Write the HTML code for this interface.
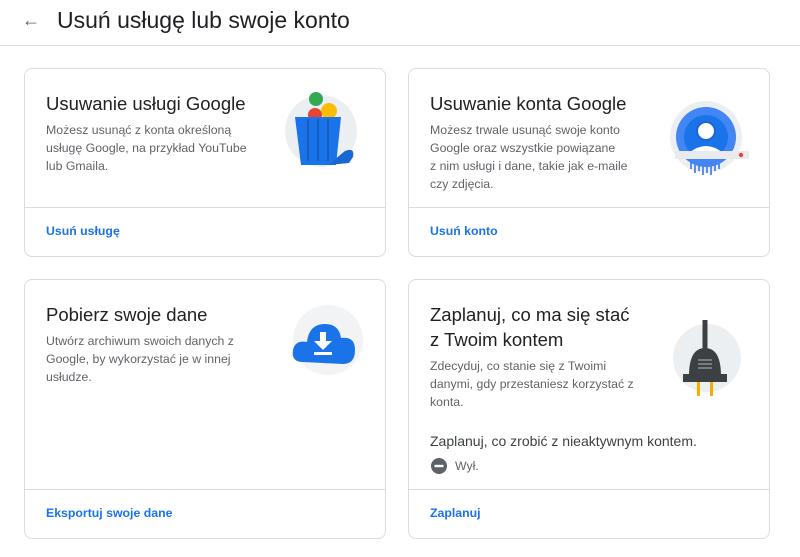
<!DOCTYPE html>
<html><head><meta charset="utf-8"><style>
*{margin:0;padding:0;box-sizing:border-box}
body{width:800px;height:557px;background:#fff;font-family:"Liberation Sans",sans-serif;position:relative;overflow:hidden;color:#202124}
.hdr{position:absolute;left:0;top:0;width:800px;height:46px;border-bottom:1px solid #dadce0}
.hdr .t{position:absolute;left:57px;top:7px;font-size:23px;color:#202124}
.hdr .a{position:absolute;left:22px;top:10px;font-size:18px;color:#5f6368}
.card{position:absolute;border:1px solid #dadce0;border-radius:8px}
.card h2{position:absolute;left:21px;font-size:18.5px;font-weight:normal;color:#202124;line-height:25px}
.card p{position:absolute;left:21px;font-size:12.3px;line-height:18px;color:#5f6368}
.card .div{position:absolute;left:0;right:0;height:1px;background:#dadce0}
.card .l{position:absolute;left:21px;font-size:12.3px;font-weight:bold;color:#1a73e8}
.card svg{position:absolute}
</style></head><body>
<div class="hdr"><span class="a">←</span><span class="t">Usuń usługę lub swoje konto</span></div>

<div class="card" style="left:24px;top:68px;width:362px;height:189px">
<h2 style="top:22px">Usuwanie usługi Google</h2>
<p style="top:52px">Możesz usunąć z konta określoną<br>usługę Google, na przykład YouTube<br>lub Gmaila.</p>
<svg style="left:258px;top:18px" width="80" height="80" viewBox="0 0 80 80">
<circle cx="38" cy="44" r="36" fill="#eceff1"/>
<circle cx="33" cy="12" r="7" fill="#34a853"/>
<circle cx="46" cy="24" r="8" fill="#fbbc04"/>
<circle cx="32" cy="28" r="7" fill="#ea4335"/>
<path d="M12 30 H58 L53 78 H18 Z" fill="#1a73e8"/>
<path d="M25 32 V74 M35 32 V74 M45 32 V74" stroke="#1557b0" stroke-width="1.5"/>
<path d="M45 78 L62 64 Q72 60 70 70 L66 76 Z" fill="#1967d2"/>
</svg>
<div class="div" style="top:138px"></div>
<div class="l" style="top:155px">Usuń usługę</div>
</div>

<div class="card" style="left:408px;top:68px;width:362px;height:189px">
<h2 style="top:22px">Usuwanie konta Google</h2>
<p style="top:52px">Możesz trwale usunąć swoje konto<br>Google oraz wszystkie powiązane<br>z nim usługi i dane, takie jak e-maile<br>czy zdjęcia.</p>
<svg style="left:258px;top:30px" width="90" height="80" viewBox="0 0 90 80">
<circle cx="39" cy="38" r="36" fill="#eceff1"/>
<circle cx="39" cy="38" r="30" fill="#4285f4"/>
<circle cx="39" cy="38" r="22" fill="#1a73e8"/>
<circle cx="39" cy="32" r="9" fill="#fff" stroke="#1967d2" stroke-width="2"/>
<path d="M22 54 Q39 40 56 54 Z" fill="#fff"/>
<rect x="8" y="52" width="74" height="8" fill="#e8eaed"/>
<circle cx="74" cy="56" r="2.2" fill="#ea4335"/>
<path d="M24 60 v10 M28 60 v14 M32 60 v12 M36 60 v16 M40 60 v14 M44 60 v16 M48 60 v12 M52 60 v10" stroke="#4285f4" stroke-width="1.8"/>
</svg>
<div class="div" style="top:138px"></div>
<div class="l" style="top:155px">Usuń konto</div>
</div>

<div class="card" style="left:24px;top:279px;width:362px;height:260px">
<h2 style="top:22px">Pobierz swoje dane</h2>
<p style="top:52px">Utwórz archiwum swoich danych z<br>Google, by wykorzystać je w innej<br>usłudze.</p>
<svg style="left:258px;top:20px" width="90" height="80" viewBox="0 0 90 80">
<circle cx="45" cy="40" r="35" fill="#f1f3f4"/>
<path d="M20 62 Q8 62 10 50 Q12 40 24 42 Q26 24 42 24 Q56 24 58 38 Q72 36 72 50 Q72 64 60 64 Z" fill="#1a73e8"/>
<path d="M37 32 h6 v9 h6 l-9 9 -9 -9 h6 Z" fill="#fff"/>
<rect x="31" y="52" width="18" height="3" fill="#fff"/>
</svg>
<div class="div" style="top:209px"></div>
<div class="l" style="top:226px">Eksportuj swoje dane</div>
</div>

<div class="card" style="left:408px;top:279px;width:362px;height:260px">
<h2 style="top:22px">Zaplanuj, co ma się stać<br>z Twoim kontem</h2>
<p style="top:77px">Zdecyduj, co stanie się z Twoimi<br>danymi, gdy przestaniesz korzystać z<br>konta.</p>
<div style="position:absolute;left:21px;top:153px;font-size:14px;color:#3c4043">Zaplanuj, co zrobić z nieaktywnym kontem.</div>
<svg style="left:21px;top:177px" width="18" height="18" viewBox="0 0 18 18"><circle cx="9" cy="9" r="8" fill="#5f6368"/><rect x="4.5" y="7.8" width="9" height="2.4" fill="#fff"/></svg>
<div style="position:absolute;left:46px;top:179px;font-size:12.3px;color:#5f6368">Wył.</div>
<svg style="left:258px;top:30px" width="80" height="95" viewBox="0 0 80 95">
<circle cx="40" cy="48" r="34" fill="#eceff1"/>
<rect x="35.5" y="10" width="5" height="30" fill="#3c4043"/>
<path d="M22 66 Q22 38 38 38 Q54 38 54 66 Z" fill="#3c4043"/>
<rect x="16" y="64" width="44" height="8" fill="#3c4043"/>
<path d="M31 50 h14 M31 54 h14 M31 58 h14" stroke="#9aa0a6" stroke-width="1.3"/>
<rect x="30" y="72" width="3" height="14" fill="#f9ab00"/>
<rect x="43" y="72" width="3" height="14" fill="#f9ab00"/>
</svg>
<div class="div" style="top:209px"></div>
<div class="l" style="top:226px">Zaplanuj</div>
</div>
</body></html>
